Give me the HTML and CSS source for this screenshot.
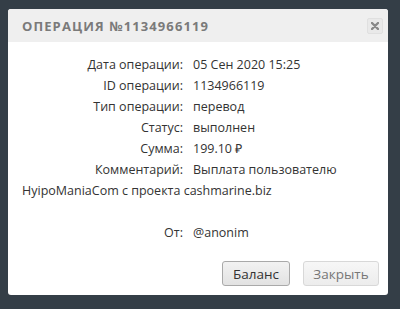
FILE: index.html
```html
<!DOCTYPE html>
<html>
<head>
<meta charset="utf-8">
<link rel="stylesheet" href="styles.css">
</head>
<body>
<div class="modal">
  <div class="modal-header">
    <span class="title">ОПЕРАЦИЯ №1134966119</span>
    <button class="close" aria-label="close">
      <svg width="8" height="8" viewBox="0 0 8 8"><path d="M1 1L7 7M7 1L1 7" stroke="#888" stroke-width="2.4" stroke-linecap="round"/></svg>
    </button>
  </div>
  <div class="modal-body">
    <p class="row"><span class="label">Дата операции:</span>05 Сен 2020 15:25</p>
    <p class="row"><span class="label">ID операции:</span>1134966119</p>
    <p class="row"><span class="label">Тип операции:</span>перевод</p>
    <p class="row"><span class="label">Статус:</span>выполнен</p>
    <p class="row"><span class="label">Сумма:</span>199.10 ₽</p>
    <p class="row"><span class="label">Комментарий:</span>Выплата пользователю HyipoManiaCom с проекта cashmarine.biz</p>
    <p class="row empty">&nbsp;</p>
    <p class="row"><span class="label">От:</span>@anonim</p>
  </div>
  <div class="modal-footer">
    <button class="btn btn-primary">Баланс</button>
    <button class="btn btn-close">Закрыть</button>
  </div>
</div>
</body>
</html>
```
FILE: styles.css
```css
html, body {
  margin: 0;
  padding: 0;
}
body {
  background: #343e47;
  width: 400px;
  height: 309px;
  overflow: hidden;
  font-family: "Open Sans", sans-serif;
  padding: 9px 0 0 8px;
  box-sizing: border-box;
}
.modal {
  width: 380px;
  height: 286px;
  background: #fff;
  border-radius: 3px;
  display: flex;
  flex-direction: column;
  overflow: hidden;
}
.modal-header {
  height: 33px;
  background: #efefef;
  display: flex;
  align-items: center;
  justify-content: space-between;
  padding: 0 5px 0 14px;
  flex-shrink: 0;
}
.title {
  font-size: 13px;
  font-weight: 700;
  color: #7a7a7a;
  letter-spacing: 1.1px;
}
.close {
  width: 16px;
  height: 16px;
  padding: 0;
  border: 1px solid #e0e0e0;
  border-radius: 2px;
  background: #e9e9e9;
  display: flex;
  align-items: center;
  justify-content: center;
}
.modal-body {
  padding: 12px 14px 0 14px;
  font-size: 12.5px;
  color: #333;
  line-height: 21px;
  flex: 1;
}
.row {
  margin: 0;
}
.label {
  display: inline-block;
  width: 161px;
  text-align: right;
  margin-right: 10px;
}
.modal-footer {
  display: flex;
  justify-content: flex-end;
  gap: 13px;
  padding: 0 9px 9px 0;
}
.btn {
  height: 25px;
  padding: 0;
  font-family: "Open Sans", sans-serif;
  font-size: 13.5px;
  color: #777;
  background: linear-gradient(#f7f7f7, #ececec);
  border: 1px solid #d8d8d8;
  border-radius: 3px;
}
.btn-primary {
  width: 68px;
  color: #333;
  border-color: #a9a9a9;
  background: linear-gradient(#f2f2f2, #e2e2e2);
}
.btn-close {
  width: 76px;
}
```
